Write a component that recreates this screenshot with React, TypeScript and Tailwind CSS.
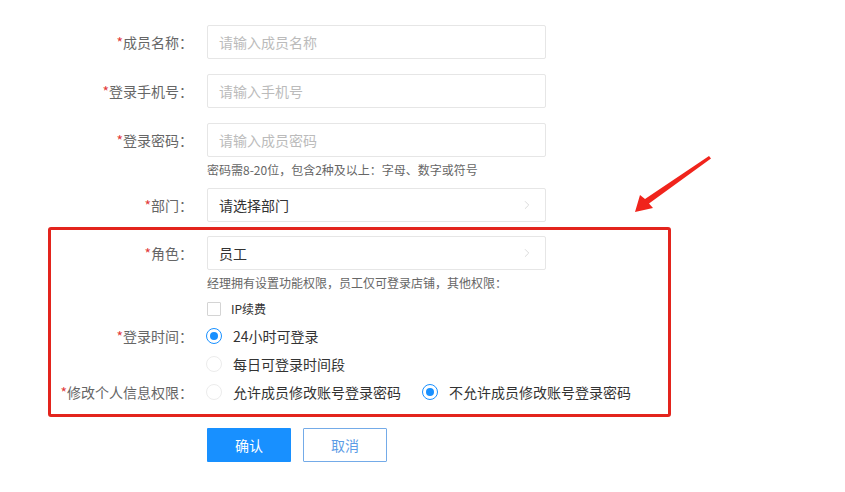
import { ChevronRight } from "lucide-react";

const font = {
  fontFamily: '"Noto Sans CJK SC", "Noto Sans", sans-serif',
};

const labelClass = "w-[142px] shrink-0 text-right text-sm text-[#666]";
const boxClass =
  "flex h-[34px] w-[339px] items-center rounded-[2px] border border-[#e6e6e6] bg-white px-[11px] text-sm";

function Label({ text }: { text: string }) {
  return (
    <div className={labelClass}>
      <span className="text-[#e23b3b]">*</span>
      {text}：
    </div>
  );
}

function Radio({ checked, text }: { checked?: boolean; text: string }) {
  return (
    <div className="flex items-center">
      <span
        className={`flex h-[16px] w-[16px] items-center justify-center rounded-full border bg-white ${
          checked ? "border-[#1890ff]" : "border-[#ececec]"
        }`}
      >
        {checked && <span className="h-[8px] w-[8px] rounded-full bg-[#1890ff]" />}
      </span>
      <span className="ml-[11px] text-sm text-[#333]">{text}</span>
    </div>
  );
}

function InputRow({ label, placeholder }: { label: string; placeholder: string }) {
  return (
    <div className="flex items-center">
      <Label text={label} />
      <div className="ml-[14px]">
        <div className={`${boxClass} text-[#bbb]`}>{placeholder}</div>
      </div>
    </div>
  );
}

function SelectBox({ value }: { value: string }) {
  return (
    <div className={`${boxClass} justify-between text-[#333]`}>
      <span>{value}</span>
      <ChevronRight className="h-[14px] w-[14px] text-[#d6d6d6]" strokeWidth={1.5} />
    </div>
  );
}

export default function App() {
  return (
    <div className="relative h-[492px] w-[845px] bg-white" style={font}>
      <div className="pl-[51px] pt-[25px]">
        <div className="flex flex-col gap-[15px]">
          <InputRow label="成员名称" placeholder="请输入成员名称" />
          <InputRow label="登录手机号" placeholder="请输入手机号" />
          <InputRow label="登录密码" placeholder="请输入成员密码" />
        </div>
        <div className="ml-[156px] h-[31px] pt-[5px] text-xs leading-[16px] text-[#666]">
          密码需8-20位，包含2种及以上：字母、数字或符号
        </div>
        <div className="flex items-center">
          <Label text="部门" />
          <div className="ml-[14px]">
            <SelectBox value="请选择部门" />
          </div>
        </div>

        <div className="-ml-[3px] mt-[5px] w-[623px] rounded-[3px] border-[3px] border-[#e3241d] pb-[8px] pt-[6px]">
          <div className="flex items-center">
            <Label text="角色" />
            <div className="ml-[14px]">
              <SelectBox value="员工" />
            </div>
          </div>
          <div className="ml-[156px] flex h-[26px] items-center text-xs text-[#666]">
            经理拥有设置功能权限，员工仅可登录店铺，其他权限：
          </div>
          <div className="ml-[156px] flex h-[26px] items-center">
            <span className="h-[14px] w-[14px] rounded-[1px] border border-[#d4d4d4] bg-white" />
            <span className="ml-[10px] text-xs text-[#333]">IP续费</span>
          </div>
          <div className="flex h-[28px] items-center">
            <Label text="登录时间" />
            <div className="ml-[13px]">
              <Radio checked text="24小时可登录" />
            </div>
          </div>
          <div className="ml-[155px] flex h-[28px] items-center">
            <Radio text="每日可登录时间段" />
          </div>
          <div className="flex h-[28px] items-center">
            <Label text="修改个人信息权限" />
            <div className="ml-[13px] flex items-center gap-[21px]">
              <Radio text="允许成员修改账号登录密码" />
              <Radio checked text="不允许成员修改账号登录密码" />
            </div>
          </div>
        </div>

        <div className="ml-[156px] mt-[11px] flex gap-[12px]">
          <button className="h-[34px] w-[84px] rounded-[1px] bg-[#1890ff] text-sm text-white">
            确认
          </button>
          <button className="h-[34px] w-[84px] rounded-[1px] border border-[#74abe8] bg-white text-sm text-[#5c9ce6]">
            取消
          </button>
        </div>
      </div>

      <svg
        className="pointer-events-none absolute left-0 top-0"
        width="845"
        height="492"
        viewBox="0 0 845 492"
      >
        <polygon
          points="635,212 640,195 645,199 709,156 711,158.5 649,203.5 653,208"
          fill="#f0241c"
        />
      </svg>
    </div>
  );
}
